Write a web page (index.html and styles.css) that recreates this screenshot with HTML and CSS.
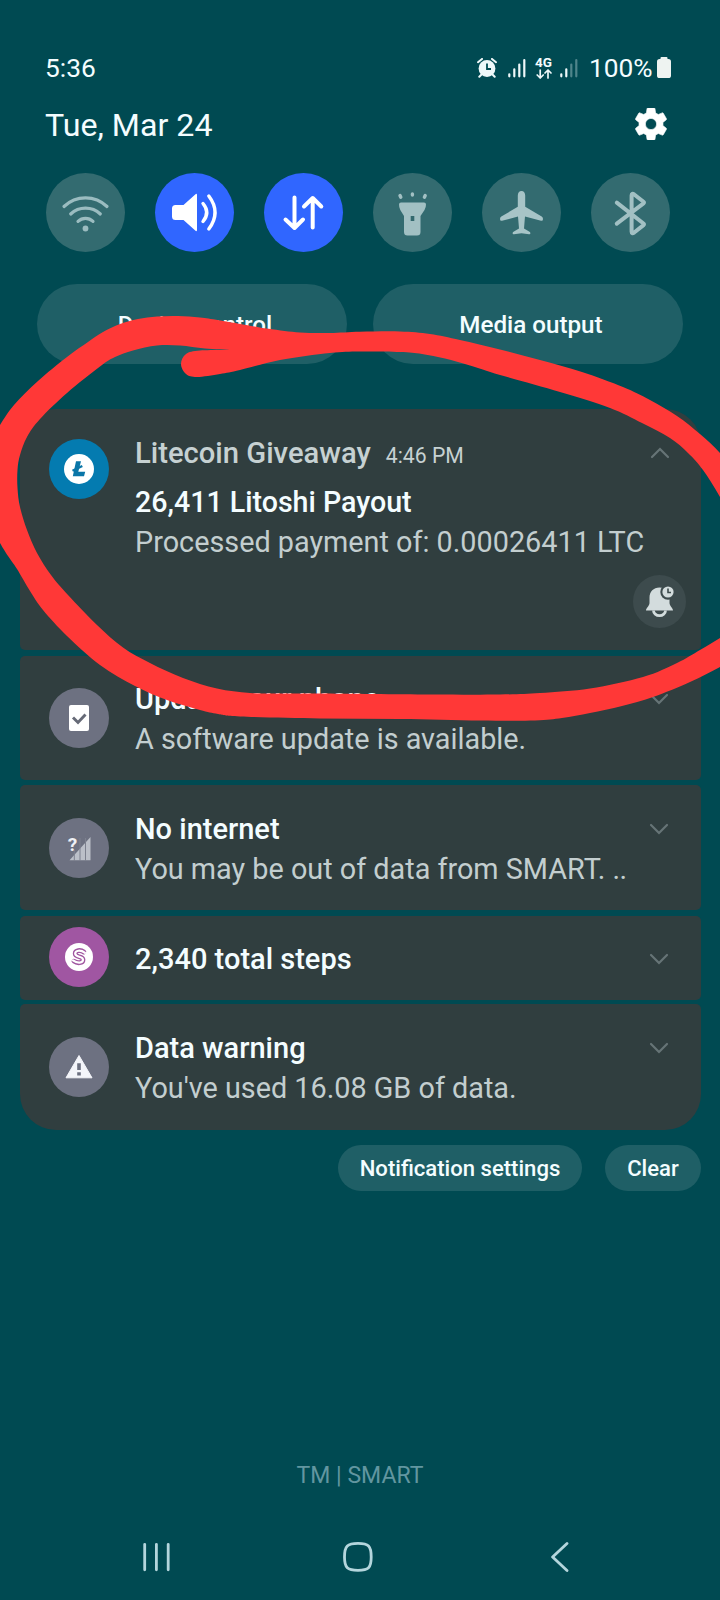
FILE: index.html
```html
<!DOCTYPE html>
<html lang="en">
<head>
<meta charset="utf-8">
<title>Notification panel</title>
<link rel="stylesheet" href="styles.css">
</head>
<body>
<div class="screen">
  <header class="status">
    <span class="clock">5:36</span>
    <div class="status-icons">
      <svg class="alarm" width="20" height="20" viewBox="0 0 20 20"><circle cx="10" cy="10.5" r="8.4" fill="#eef8f9"/><path d="M1 4.2 5 .9M19 4.2 15 .9M4.5 16.5 2.3 18.8M15.5 16.5l2.2 2.3" stroke="#eef8f9" stroke-width="2" stroke-linecap="round"/><path d="M10 5.5V11h4" fill="none" stroke="#004a52" stroke-width="1.8"/></svg>
      <svg class="bars" width="18" height="20" viewBox="0 0 18 20" stroke="#eef8f9" stroke-width="2.2" stroke-linecap="round"><path d="M1.3 18.3v-2M6.3 18.3v-7M11.3 18.3V6.5M16.3 18.3V2"/></svg>
      <div class="net"><span>4G</span><svg width="16" height="10" viewBox="0 0 16 10" fill="none" stroke="#eef8f9" stroke-width="1.7" stroke-linecap="round" stroke-linejoin="round"><path d="M4.2 1v8M1.2 6l3 3 3-3M12 9V1M9 4l3-3 3 3"/></svg></div>
      <svg class="bars2" width="18" height="20" viewBox="0 0 18 20" stroke="#eef8f9" stroke-width="2.2" stroke-linecap="round"><path d="M1.3 18.3v-2M6.3 18.3v-7"/><path d="M11.3 18.3V6.5M16.3 18.3V2" stroke="#4f858b"/></svg>
      <span class="pct">100%</span>
      <svg width="14" height="21" viewBox="0 0 14 21" fill="#eef3f1"><rect x="3.5" width="7" height="5" rx="1"/><rect y="2" width="14" height="19" rx="2.6"/></svg>
    </div>
  </header>

  <div class="date-row">
    <span class="date">Tue, Mar 24</span>
    <svg width="32" height="32" viewBox="2 2 20 20" fill="#fff"><path d="M19.43 12.98c.04-.32.07-.64.07-.98s-.03-.66-.07-.98l2.11-1.65c.19-.15.24-.42.12-.64l-2-3.46c-.12-.22-.39-.3-.61-.22l-2.49 1c-.52-.4-1.08-.73-1.69-.98l-.38-2.65C14.46 2.18 14.25 2 14 2h-4c-.25 0-.46.18-.49.42l-.38 2.65c-.61.25-1.17.59-1.69.98l-2.49-1c-.23-.09-.49 0-.61.22l-2 3.46c-.13.22-.07.49.12.64l2.11 1.65c-.04.32-.07.65-.07.98s.03.66.07.98l-2.11 1.65c-.19.15-.24.42-.12.64l2 3.46c.12.22.39.3.61.22l2.49-1c.52.4 1.08.73 1.69.98l.38 2.65c.03.24.24.42.49.42h4c.25 0 .46-.18.49-.42l.38-2.65c.61-.25 1.17-.59 1.69-.98l2.49 1c.23.09.49 0 .61-.22l2-3.46c.12-.22.07-.49-.12-.64l-2.11-1.65zM12 15.5c-1.93 0-3.5-1.57-3.5-3.5s1.57-3.5 3.5-3.5 3.5 1.57 3.5 3.5-1.57 3.5-3.5 3.5z" stroke="#fff" stroke-width=".4"/></svg>
  </div>

  <nav class="toggles">
    <div class="toggle"><svg viewBox="0 0 79 79" fill="none" stroke="#9bbcc0" stroke-width="3.2" stroke-linecap="round"><path d="M18 33.5a31 31 0 0 1 43 0M24.7 41a21.500 21.500 0 0 1 29.600 0M32 48.300a11 11 0 0 1 15 0"/><circle cx="39.500" cy="55.500" r="2.900" fill="#9bbcc0" stroke="none"/></svg></div>
    <div class="toggle on"><svg viewBox="0 0 79 79"><path d="M17 35.500q0-3.500 3.500-3.500h8L40.500 21.200q1.500-1 1.500.8v35q0 1.800-1.500.8L28.500 47h-8q-3.500 0-3.500-3.500z" fill="#fff"/><path d="M48 30.500q7.500 9 0 18M53.800 23q12.500 16.500 0 33" fill="none" stroke="#fff" stroke-width="3.400" stroke-linecap="round"/></svg></div>
    <div class="toggle on"><svg viewBox="0 0 79 79" fill="none" stroke="#fff" stroke-width="4" stroke-linecap="round" stroke-linejoin="round"><path d="M30.500 24.500V54M21.500 46.500l9 8.500 8.500-8.500M48.700 54.500V25M40 33.500l8.700-8.500 8.600 8.500"/></svg></div>
    <div class="toggle"><svg viewBox="0 0 79 79"><path d="M26 31.500q0-2 2-2h23q2 0 2 2 0 3-1.500 5.500L47.500 43v16q0 3.500-3.500 3.500h-9.500q-3.500 0-3.500-3.500V43l-3.700-6Q26 34.500 26 31.500z" fill="#a2c0c3"/><rect x="37.700" y="43" width="3.600" height="5" fill="#33696e"/><path d="M27 22.500l.8 1.800M39.400 21v1M52.200 22.500l-.8 1.800" stroke="#a2c0c3" stroke-width="3.400" stroke-linecap="round"/></svg></div>
    <div class="toggle"><svg viewBox="0 0 79 79"><path d="M39.500 18c2.300 0 3.700 2 3.700 4.500v11.300l16.500 9.700q1.300.8 1.300 2.500 0 2.200-2 1.800L43 43.500l-1 12 5.500 3.200q1 .6.900 1.600-.1 1.300-1.400 1l-7.500-1.100-7.500 1.100q-1.300.3-1.400-1-.1-1 .9-1.600l5.500-3.200-1-12L20 47.800q-2 .4-2-1.800 0-1.700 1.300-2.500l16.500-9.700V22.500c0-2.500 1.400-4.500 3.700-4.500z" fill="#a7c4c7"/></svg></div>
    <div class="toggle"><svg viewBox="0 0 79 79" fill="none" stroke="#a2c0c3" stroke-width="4" stroke-linecap="round" stroke-linejoin="round"><path d="M25.800 29.700 52.500 50.500q1 .8 0 1.600l-9.300 7.400q-2.600 1.700-2.600-1V22.500q0-2.700 2.600-1l9.300 7.300q1 .8 0 1.600L25.800 50.700"/></svg></div>
  </nav>

  <div class="panels">
    <div class="panel">Device control</div>
    <div class="panel">Media output</div>
  </div>

  <main class="cards">
    <article class="card first">
      <div class="icon ltc"><svg width="60" height="60" viewBox="0 0 60 60"><circle cx="30" cy="30" r="15" fill="#fff"/><path d="M27 22.300h5L29.300 32.800h6.900l-1.200 4.400H23.800z" fill="#0a76a8"/><path d="M23.500 31.800 33.300 27" stroke="#0a76a8" stroke-width="2.300"/></svg></div>
      <div class="text">
        <div class="app">Litecoin Giveaway<span class="time">4:46 PM</span></div>
        <div class="title">26,411 Litoshi Payout</div>
        <div class="body">Processed payment of: 0.00026411 LTC</div>
      </div>
      <div class="side">
        <svg class="chev" width="20" height="12" viewBox="0 0 20 12"><path d="M2 10 10 2l8 8"/></svg>
        <div class="snooze"><svg width="53" height="53" viewBox="0 0 53 53"><path d="M26.500 12.500c-6 0-10 4.200-10 10v5.500c0 3-3.500 5-3.500 7.500h27c0-2.500-3.500-4.500-3.500-7.500v-5.500c0-5.800-4-10-10-10z" fill="#d3dcdd"/><path d="M20.500 35.500a6 5.200 0 0 0 12 0" fill="none" stroke="#d3dcdd" stroke-width="2.800"/><circle cx="35" cy="17" r="7.700" fill="#3d4b4d"/><circle cx="35" cy="17" r="5.600" fill="#d3dcdd"/><path d="M35 13.500V17.500h3" fill="none" stroke="#3d4b4d" stroke-width="1.600"/></svg></div>
      </div>
    </article>

    <article class="card update">
      <div class="icon"><svg width="60" height="60" viewBox="0 0 60 60"><rect x="20" y="17" width="20" height="26" rx="2" fill="#fff"/><path d="M24 29.500l5 5 7.500-8" fill="none" stroke="#666a77" stroke-width="2.900"/></svg></div>
      <div class="text"><div class="title">Update your phone</div><div class="body">A software update is available.</div></div>
      <svg class="chev" width="20" height="12" viewBox="0 0 20 12"><path d="M2 2l8 8 8-8"/></svg>
    </article>

    <article class="card internet">
      <div class="icon"><svg width="60" height="60" viewBox="0 0 60 60"><path d="M20.500 42.300 41.500 19v23.300z" fill="#bbbfc8"/><path d="M25.300 20v23M31 20v23M36.500 20v23" stroke="#7c808e" stroke-width="1"/><circle cx="23" cy="26" r="6.500" fill="#6d7181"/><text x="18.800" y="32.500" class="q">?</text></svg></div>
      <div class="text"><div class="title">No internet</div><div class="body">You may be out of data from SMART. <span class="dots">..</span></div></div>
      <svg class="chev" width="20" height="12" viewBox="0 0 20 12"><path d="M2 2l8 8 8-8"/></svg>
    </article>

    <article class="card steps">
      <div class="icon purple"><svg width="60" height="60" viewBox="0 0 60 60"><circle cx="30" cy="30" r="14" fill="#fff"/><g fill="none" stroke-linecap="round"><path d="M34.800 25C31.500 22.500 26.200 23.300 26.200 26.600C26.200 31 34 28.500 34 32.800C34 36.300 28.200 36.600 25 34.200" stroke="#a056a0" stroke-width="4.800"/><path d="M36 25.800C31.500 22.500 26.200 23.300 26.200 26.600C26.200 31 34 28.500 34 32.800C34 36.300 28.200 36.600 24 33.400" stroke="#fff" stroke-width="2.200"/></g></svg></div>
      <div class="text"><div class="title">2,340 total steps</div></div>
      <svg class="chev" width="20" height="12" viewBox="0 0 20 12"><path d="M2 2l8 8 8-8"/></svg>
    </article>

    <article class="card warning">
      <div class="icon"><svg width="60" height="60" viewBox="0 0 60 60"><path d="M30 18.500 43 40.800H17z" fill="#f4f5fa" stroke="#f4f5fa" stroke-width="1" stroke-linejoin="round"/><path d="M30 26.300v6.800M30 35.300v3.200" stroke="#6c7080" stroke-width="3.600"/></svg></div>
      <div class="text"><div class="title">Data warning</div><div class="body">You've used 16.08 GB of data.</div></div>
      <svg class="chev" width="20" height="12" viewBox="0 0 20 12"><path d="M2 2l8 8 8-8"/></svg>
    </article>
  </main>

  <div class="actions">
    <div class="action settings">Notification settings</div>
    <div class="action clear">Clear</div>
  </div>

  <footer class="footer">
    <div class="carrier">TM | SMART</div>
    <div class="navbar">
      <svg width="28" height="30" viewBox="0 0 28 30"><path d="M1.700 2.300v25.500M13.400 2.300v25.500M25.200 2.300v25.500"/></svg>
      <svg class="home" width="30" height="30" viewBox="0 0 30 30"><path d="M15 1.400C25.500 1.400 28.200 4 28.200 15S25.500 28.300 15 28.300 1.500 26 1.500 15 4.500 1.400 15 1.400z"/></svg>
      <svg width="18" height="30" viewBox="0 0 18 30"><path d="M16 1.500 1.600 15 16 28.500"/></svg>
    </div>
  </footer>

  <svg class="scribble" width="720" height="1600" viewBox="0 0 720 1600"><path id="stroke" fill="#ff3837"/></svg>
</div>
<script src="scribble.js"></script>
</body>
</html>
```
FILE: scribble.js
```js
// Outline of the marker loop; each run is smoothed as a Catmull-Rom spline.
const runs = [
  [[-12,445],[0,425],[14,405],[38,381],[67,357],[88,342],[103,332],[120,324],[138,319],[157,316.5],[178,316],[200,317.5],[220,320.5],[267,328.5],[300,332.5],[330,333],[360,331.8],[400,331.5],[430,334],[460,340],[500,349.5],[540,360],[582,372],[623,387],[650,400],[677,416],[700,434],[720,453],[740,480]],
  [[740,535],[720,497],[703,470],[688,453],[670,438],[642,423],[610,408],[560,392],[500,375],[470,365.5],[445,358.5],[422,354],[400,352],[360,351.5],[330,353],[280,360],[240,370],[220,374],[197,377],[186,374],[181,364],[186,354],[200,350.500],[232,350]],
  [[232,350],[205,348.500],[180,345.5],[157,345.500],[133,350.5],[115,357],[100,366.5],[67,393],[40,419],[27,437],[20,455],[17.5,470],[17.5,488],[20,507],[27,530],[37,553],[51,575],[68,595],[97,625],[123,647.5],[150,663],[183,678],[217,688.500],[250,693],[285,693.500],[320,693.500],[430,694.500],[500,694.500],[540,693],[590,688.5],[643,677],[677,663],[700,650],[720,638],[740,625]],
  [[740,655],[720,667],[690,682],[653,697],[622,706],[590,713],[562,718],[535,720.5],[480,720.5],[400,719],[320,718.5],[240,716.5],[218,714],[200,710],[167,700],[135,686],[100,665],[67,636],[43,610],[30,591],[17,569],[8,556],[0,543],[-12,520]]
];

function segment(p) {
  let d = "";
  for (let i = 0; i < p.length - 1; i++) {
    const a = p[i - 1] || p[i], b = p[i], c = p[i + 1], e = p[i + 2] || c;
    d += `C${b[0] + (c[0] - a[0]) / 6} ${b[1] + (c[1] - a[1]) / 6} ${c[0] - (e[0] - b[0]) / 6} ${c[1] - (e[1] - b[1]) / 6} ${c[0]} ${c[1]}`;
  }
  return d;
}

document.getElementById("stroke").setAttribute(
  "d",
  "M" + runs[0][0] + runs.map((r, i) => (i ? "L" + r[0] : "") + segment(r)).join("") + "Z"
);
```
FILE: styles.css
```css
* { box-sizing: border-box; }
body { margin: 0; background: #004a52; font-family: Roboto, "Liberation Sans", sans-serif; }
svg { display: block; flex: none; }
.screen { position: relative; width: 720px; height: 1600px; overflow: hidden; background: #004a52; color: #f4fdff; display: flex; flex-direction: column; white-space: nowrap; }

.status { height: 48px; margin-top: 44px; padding: 0 49px 0 45px; display: flex; justify-content: space-between; align-items: center; font-size: 26.300px; line-height: 48px; }
.status-icons { display: flex; align-items: center; padding-bottom: 1px; }
.alarm { margin-right: 11px; }
.bars { margin-right: 9px; }
.net { width: 17px; margin-right: 8px; display: flex; flex-direction: column; align-items: center; gap: 1px; font-size: 13.500px; font-weight: 700; line-height: 11px; }
.bars2 { margin-right: 11px; }
.pct { width: 64px; margin-right: 4px; }

.date-row { height: 62px; margin-top: 1px; padding: 0 53px 0 45px; display: flex; justify-content: space-between; align-items: center; font-size: 32.200px; line-height: 62px; }
.date { padding-top: 1px; }

.toggles { margin-top: 18px; padding: 0 50px 0 46px; display: flex; justify-content: space-between; }
.toggle { width: 79px; height: 79px; border-radius: 50%; background: #336b70; }
.toggle.on { background: #3066ff; }

.panels { margin-top: 32px; padding: 0 37px; display: flex; justify-content: space-between; }
.panel { width: 310px; height: 80px; border-radius: 40px; background: #1f5f66; text-align: center; font-size: 24.200px; font-weight: 500; line-height: 82px; padding-left: 6px; }

.cards { margin: 45px 19px 0 20px; display: flex; flex-direction: column; }
.card { display: flex; padding: 0 32px 0 29px; background: #303e3f; border-radius: 5px; align-items: center; }
.card.first { height: 241px; border-radius: 36px 36px 5px 5px; align-items: flex-start; padding-right: 15px; }
.first .icon { margin-top: 30px; }
.update { height: 124px; margin-top: 6px; }
.internet { height: 125px; margin-top: 5px; }
.steps { height: 84px; margin-top: 6px; }
.warning { height: 126px; margin-top: 4px; border-radius: 5px 5px 36px 36px; }
.icon { width: 60px; height: 60px; border-radius: 50%; background: #6d7181; flex: none; }
.icon.ltc { background: #047bb0; }
.icon.purple { background: #a056a2; margin-bottom: 2px; }
.q { font-size: 19px; font-weight: 700; fill: #eef0f5; }
.text { flex: 1; min-width: 0; margin-left: 26px; align-self: flex-start; padding-top: 23px; font-size: 28.800px; line-height: 40px; }
.first .text { padding-top: 24px; }
.app { font-size: 29.200px; font-weight: 500; color: #c6d1d2; }
.time { margin-left: 15px; font-size: 21.200px; font-weight: 400; }
.title { font-size: 29px; font-weight: 500; }
.first .title { font-size: 28.600px; padding-top: 6px; }
.body { color: #c3cecf; }
.internet .text, .warning .text { padding-top: 24px; }
.dots { letter-spacing: -0.5px; }
.chev { fill: none; stroke: #667476; stroke-width: 2.200; stroke-linecap: round; align-self: flex-start; margin-top: 37px; }
.internet .chev, .warning .chev { margin-top: 38px; }
.side { width: 53px; margin-left: -53px; display: flex; flex-direction: column; align-items: center; }
.side .chev { align-self: center; margin-top: 38px; }
.snooze { margin-top: 116px; width: 53px; height: 53px; border-radius: 50%; background: #3d4b4d; }

.actions { margin-top: 15px; padding-right: 19px; display: flex; justify-content: flex-end; gap: 23px; }
.action { height: 46px; border-radius: 23px; background: #1f5f66; font-size: 22.100px; font-weight: 500; line-height: 47px; text-align: center; }
.settings { width: 244px; }
.clear { width: 96px; }

.footer { margin-top: auto; height: 144px; }
.carrier { text-align: center; color: #6296a0; font-size: 23px; line-height: 40px; }
.navbar { margin-top: 46px; padding: 0 151px 0 143px; display: flex; justify-content: space-between; fill: none; stroke: #b4d6dd; stroke-width: 2.800; stroke-linecap: round; stroke-linejoin: round; }
.home { margin-right: 7px; }

.scribble { position: absolute; left: 0; top: 0; }
```
